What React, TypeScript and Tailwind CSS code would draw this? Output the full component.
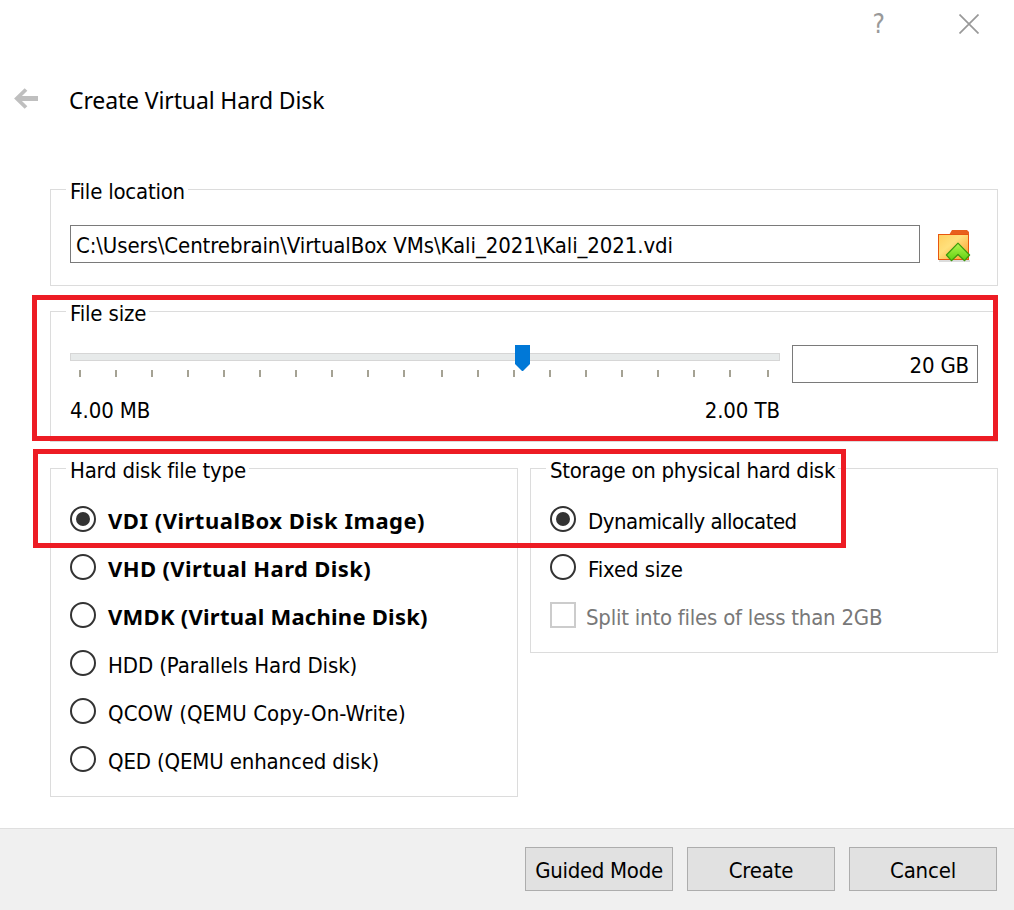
import { useState } from 'react';
import type { ReactNode } from 'react';
import clsx from 'clsx';

const TICKS = Array.from({ length: 20 }, (_, i) => i);
const WIDE_TICKS = [10, 19];

const FILE_TYPES = [
  { id: 'vdi', label: 'VDI (VirtualBox Disk Image)', bold: true, tracking: 'tracking-[0.5px]' },
  { id: 'vhd', label: 'VHD (Virtual Hard Disk)', bold: true, tracking: 'tracking-[0.38px]' },
  { id: 'vmdk', label: 'VMDK (Virtual Machine Disk)', bold: true, tracking: 'tracking-[0.25px]' },
  { id: 'hdd', label: 'HDD (Parallels Hard Disk)', bold: false, tracking: 'tracking-[-0.11px]' },
  { id: 'qcow', label: 'QCOW (QEMU Copy-On-Write)', bold: false, tracking: 'tracking-[0.06px]' },
  { id: 'qed', label: 'QED (QEMU enhanced disk)', bold: false, tracking: 'tracking-[-0.15px]' },
];

function Group({
  title,
  tracking,
  className,
  children,
}: {
  title: string;
  tracking: string;
  className: string;
  children: ReactNode;
}) {
  return (
    <section className={clsx('border border-[#dcdcdc] px-[19px]', className)}>
      <div className="-mt-3 mb-[-1px] -ml-1 flex">
        <h2 className={clsx('bg-white pr-[3px] pl-1 leading-7 whitespace-nowrap', tracking)}>{title}</h2>
      </div>
      {children}
    </section>
  );
}

function Radio({
  label,
  checked,
  bold = false,
  tracking,
  onSelect,
}: {
  label: string;
  checked: boolean;
  bold?: boolean;
  tracking: string;
  onSelect: () => void;
}) {
  return (
    <button
      type="button"
      role="radio"
      aria-checked={checked}
      onClick={onSelect}
      className="flex h-12 items-center gap-3"
    >
      <span className="flex size-[26px] shrink-0 items-center justify-center rounded-full border-2 border-[#333]">
        {checked && <span className="size-3.5 rounded-full bg-[#333]" />}
      </span>
      <span
        className={clsx(
          'leading-7 whitespace-nowrap',
          bold ? "pt-0.5 font-['Noto_Sans',sans-serif] font-bold" : 'pt-1.5',
          tracking
        )}
      >
        {label}
      </span>
    </button>
  );
}

function FolderIcon() {
  return (
    <svg width="34" height="34" viewBox="0 0 34 34" aria-hidden="true">
      <defs>
        <linearGradient id="folder" x1="0" y1="0" x2="1" y2="1">
          <stop offset="0" stopColor="#ffcf5e" />
          <stop offset="0.4" stopColor="#ffe07c" />
          <stop offset="1" stopColor="#fb9a2c" />
        </linearGradient>
        <linearGradient id="arrow" x1="0" y1="0" x2="0" y2="1">
          <stop offset="0" stopColor="#b4f550" />
          <stop offset="1" stopColor="#5fcf10" />
        </linearGradient>
      </defs>
      <path d="M1 31h31" stroke="#b9b9b9" strokeWidth="1" />
      <path d="M11 5l3-5h15l2 2v4H11z" fill="#e8601c" />
      <rect x="0.5" y="4.5" width="30" height="25" fill="url(#folder)" stroke="#e8560f" />
      <path
        d="M20 13.2L31.6 25l-5 5.7-6.6-6.2-6.6 6.2-5-5.7z"
        fill="url(#arrow)"
        stroke="#3b9a0c"
        strokeWidth="1.2"
        strokeLinejoin="round"
      />
    </svg>
  );
}

function SizeSlider() {
  return (
    <div className="relative w-[710px] pt-2">
      <div className="h-2 border border-[#d6d6d6] bg-[#e7eaea]" />
      <div className="mt-[9px] ml-[-25px] flex">
        {TICKS.map((i) => (
          <span
            key={i}
            className={clsx('h-[7px] w-0.5 bg-[#a5a294]', WIDE_TICKS.includes(i) ? 'ml-9' : 'ml-[34px]')}
          />
        ))}
      </div>
      <svg className="absolute top-0 left-[445px]" width="15" height="26" viewBox="0 0 15 26">
        <path d="M0 0h15v19l-7 7h-1l-7-7z" fill="#0078d7" />
      </svg>
      <div className="mt-5 flex justify-between leading-7 tracking-[-0.1px]">
        <span>4.00 MB</span>
        <span>2.00 TB</span>
      </div>
    </div>
  );
}

function PushButton({ label, tracking }: { label: string; tracking: string }) {
  return (
    <button
      type="button"
      className={clsx(
        'h-11 w-[148px] border border-[#adadad] bg-[#e1e1e1] pt-[3px] leading-7 whitespace-nowrap',
        tracking
      )}
    >
      {label}
    </button>
  );
}

export default function App() {
  const [fileType, setFileType] = useState('vdi');
  const [storage, setStorage] = useState('dynamic');

  return (
    <div className="relative flex h-[910px] w-[1014px] flex-col overflow-hidden bg-white font-['DejaVu_Sans_Condensed','DejaVu_Sans',sans-serif] text-[22px] text-black">
      <div className="flex h-12 items-center justify-end gap-[74px] pr-[35px]">
        <span className="text-[26px] leading-8 text-[#999]">?</span>
        <svg width="20" height="20" viewBox="0 0 20 20" fill="none" stroke="#999" strokeWidth="1.7">
          <path d="M0.5 0.5l19 19M19.5 0.5l-19 19" />
        </svg>
      </div>

      <header className="flex h-[141px] gap-[31px] pt-[34px] pl-3.5">
        <svg className="mt-[6px]" width="24" height="21" viewBox="0 0 24 21" fill="none" stroke="#bfbfbf">
          <path d="M24 10.5H3" strokeWidth="5" />
          <path d="M12 1.5l-9.2 9 9.2 9" strokeWidth="3.8" />
        </svg>
        <h1 className="font-['Noto_Sans',sans-serif] text-[23px] leading-9 tracking-[-0.13px]">
          Create Virtual Hard Disk
        </h1>
      </header>

      <main className="flex flex-1 flex-col pr-4 pl-[50px]">
        <Group title="File location" tracking="tracking-[-0.22px]" className="h-[97px]">
          <div className="mt-5 flex gap-[18px]">
            <div className="h-[38px] w-[850px] border border-[#7a7a7a] pt-1 pl-[5px] leading-8 tracking-[-0.1px]">
              {'C:\\Users\\Centrebrain\\VirtualBox VMs\\Kali_2021\\Kali_2021.vdi'}
            </div>
            <div className="pt-[5px]">
              <FolderIcon />
            </div>
          </div>
        </Group>

        <Group title="File size" tracking="tracking-[-0.15px]" className="mt-[25px] h-[131px]">
          <div className="mt-[18px] flex gap-3">
            <SizeSlider />
            <div className="h-[38px] w-[186px] border border-[#7a7a7a] pt-1 pr-2 text-right leading-8 tracking-[-0.2px]">
              20 GB
            </div>
          </div>
        </Group>

        <div className="mt-[26px] flex items-start gap-3">
          <Group title="Hard disk file type" tracking="tracking-[-0.24px]" className="h-[329px] w-[468px]">
            <div role="radiogroup" className="mt-[11px]">
              {FILE_TYPES.map((type) => (
                <Radio
                  key={type.id}
                  label={type.label}
                  bold={type.bold}
                  tracking={type.tracking}
                  checked={fileType === type.id}
                  onSelect={() => setFileType(type.id)}
                />
              ))}
            </div>
          </Group>

          <Group
            title="Storage on physical hard disk"
            tracking="tracking-[-0.28px]"
            className="h-[185px] w-[468px]"
          >
            <div role="radiogroup" className="mt-[11px]">
              <Radio
                label="Dynamically allocated"
                tracking="tracking-[-0.5px]"
                checked={storage === 'dynamic'}
                onSelect={() => setStorage('dynamic')}
              />
              <Radio
                label="Fixed size"
                tracking="tracking-[-0.1px]"
                checked={storage === 'fixed'}
                onSelect={() => setStorage('fixed')}
              />
            </div>
            <div className="flex h-12 items-center gap-2.5">
              <span className="size-[26px] shrink-0 border-2 border-[#ccc]" />
              <span className="pt-1.5 leading-7 tracking-[-0.23px] whitespace-nowrap text-[#787878]">
                Split into files of less than 2GB
              </span>
            </div>
          </Group>
        </div>
      </main>

      <footer className="flex h-[82px] gap-3.5 border-t border-[#dfdfdf] bg-[#f0f0f0] pt-[18px] pl-[525px]">
        <PushButton label="Guided Mode" tracking="tracking-[-0.3px]" />
        <PushButton label="Create" tracking="tracking-[-0.2px]" />
        <PushButton label="Cancel" tracking="tracking-[-0.2px]" />
      </footer>

      {/* highlight frames over the size and type sections */}
      <div className="pointer-events-none absolute top-[295px] left-8 h-[146px] w-[966px] border-5 border-[#ed1c24]" />
      <div className="pointer-events-none absolute top-[449px] left-[33px] h-[99px] w-[813px] border-5 border-[#ed1c24]" />
    </div>
  );
}
